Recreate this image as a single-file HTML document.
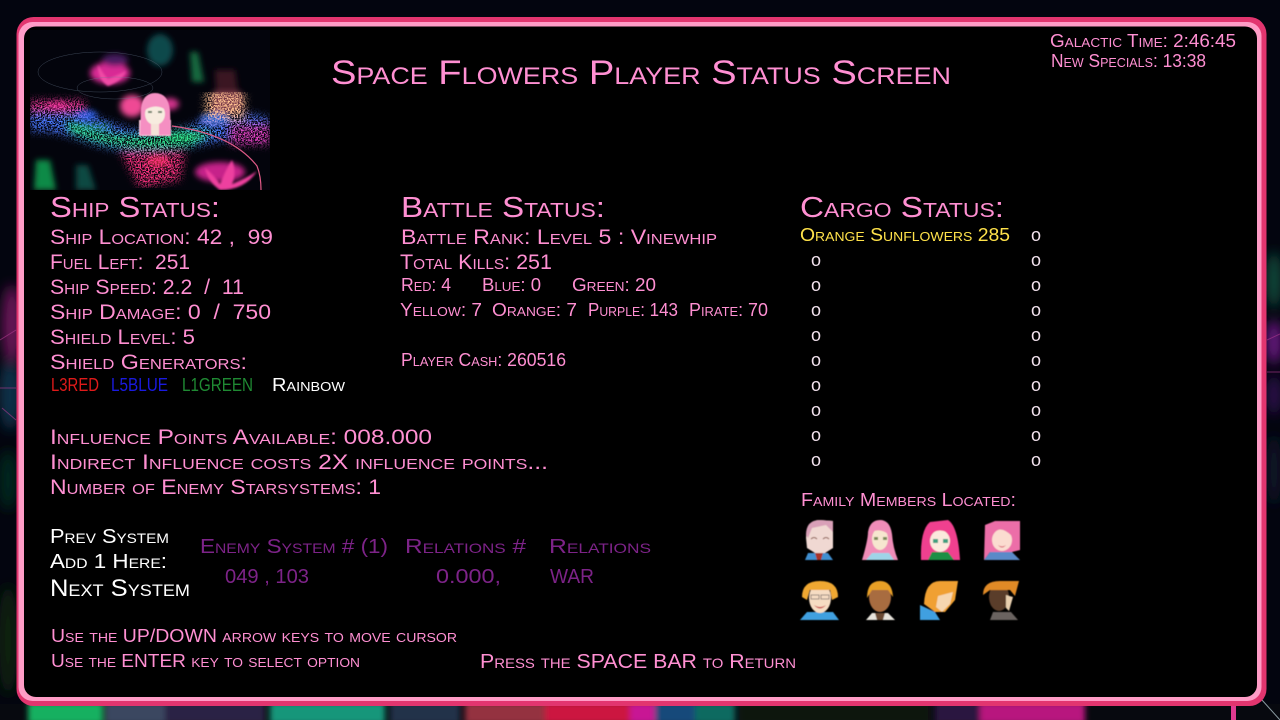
<!DOCTYPE html>
<html><head><meta charset="utf-8"><title>Space Flowers Player Status Screen</title>
<style>
html,body{margin:0;padding:0;background:#03050f;width:1280px;height:720px;overflow:hidden}
svg{display:block;position:absolute;left:0;top:0}
text{font-family:"Liberation Sans",sans-serif;font-variant:small-caps;fill:#ff8fd2;white-space:pre}
.s17{font-size:18px}.s19{font-size:20px}.s20{font-size:21px}.s28{font-size:29px}
.p{fill:#7d2388;font-size:20px}
.w{fill:#fff}
.o{font-size:18px;font-variant:normal;fill:#f3e3ee;text-anchor:middle}
</style></head><body>
<svg width="1280" height="720" viewBox="0 0 1280 720" xmlns="http://www.w3.org/2000/svg">
<defs>
<filter id="b3" x="-50%" y="-50%" width="200%" height="200%"><feGaussianBlur stdDeviation="3"/></filter>
<filter id="b6" x="-50%" y="-50%" width="200%" height="200%"><feGaussianBlur stdDeviation="6"/></filter>
<filter id="b1"><feGaussianBlur stdDeviation="1"/></filter>
<filter id="soft"><feGaussianBlur stdDeviation=".45"/></filter>
<filter id="sp" x="0" y="0" width="100%" height="100%">
<feGaussianBlur in="SourceGraphic" stdDeviation="4" result="c"/>
<feTurbulence type="fractalNoise" baseFrequency="0.7" numOctaves="2" seed="4"/>
<feColorMatrix type="matrix" values="0 0 0 0 1 0 0 0 0 1 0 0 0 0 1 7 0 0 0 -3"/>
<feComposite in="c" operator="in"/>
</filter>
<clipPath id="im"><rect x="30" y="30" width="240" height="160"/></clipPath>
</defs>

<!-- background -->
<rect width="1280" height="720" fill="#03050f"/>
<g filter="url(#b6)">
<ellipse cx="12" cy="325" rx="10" ry="40" fill="#6a1258"/>
<ellipse cx="10" cy="395" rx="11" ry="35" fill="#0f3048"/>
<ellipse cx="8" cy="480" rx="10" ry="30" fill="#05251a"/>
<ellipse cx="8" cy="640" rx="10" ry="55" fill="#08220f"/>
<ellipse cx="1274" cy="280" rx="8" ry="28" fill="#0a4a3a"/>
<ellipse cx="1274" cy="342" rx="9" ry="22" fill="#64147a"/>
<ellipse cx="1274" cy="395" rx="8" ry="20" fill="#2a1048"/>
<ellipse cx="1274" cy="470" rx="8" ry="35" fill="#0a1428"/>
</g>
<path d="M0 388H16M0 340L16 330M2 408L16 420M1267 340L1280 334M1267 372H1280" stroke="#b03a90" stroke-width="1" opacity=".6"/>
<rect x="0" y="704" width="1280" height="16" fill="#07090f"/>
<g filter="url(#b3)">
<rect x="28" y="702" width="75" height="22" fill="#18b060"/>
<rect x="105" y="702" width="60" height="22" fill="#3a4660"/>
<rect x="165" y="702" width="100" height="22" fill="#2a2045"/>
<rect x="270" y="702" width="115" height="22" fill="#12967a"/>
<rect x="390" y="702" width="70" height="22" fill="#223048"/>
<rect x="465" y="702" width="80" height="22" fill="#94303f"/>
<rect x="545" y="702" width="85" height="22" fill="#cc1440"/>
<rect x="630" y="702" width="25" height="22" fill="#c81894"/>
<rect x="655" y="702" width="40" height="22" fill="#124a7a"/>
<rect x="695" y="702" width="40" height="22" fill="#0f6a60"/>
<rect x="740" y="702" width="190" height="22" fill="#081410"/>
<rect x="935" y="702" width="45" height="22" fill="#2a1440"/>
<rect x="980" y="702" width="105" height="22" fill="#b8127e"/>
</g>
<rect x="1231" y="706" width="5" height="14" fill="#e03a90"/>
<path d="M1262 700L1280 720" stroke="#8a9aa0" stroke-width="1" fill="none"/>

<!-- frame -->
<rect x="16.5" y="17" width="1250" height="689" rx="17" fill="#e2356f"/>
<rect x="18.5" y="22" width="1243" height="679" rx="14" fill="#ff9cc6"/>
<rect x="24" y="26.500" width="1233" height="670.500" rx="12" fill="#000"/>

<!-- picture -->
<g clip-path="url(#im)">
<rect x="30" y="30" width="240" height="160" fill="#03040c"/>
<g filter="url(#b3)">
<ellipse cx="160" cy="50" rx="13" ry="16" fill="#0d4a4c"/>
<path d="M190 52l8 0 6 30-12 0z" fill="#126a40"/>
<path d="M212 92l30 0 0 18-30 6z" fill="#7a3a48"/>
<path d="M215 70l20 0 3 22-22 0z" fill="#3a1422"/>
<ellipse cx="110" cy="73" rx="20" ry="11" fill="#d92a95"/>
<ellipse cx="115" cy="60" rx="13" ry="6" fill="#4a1a60"/>
<ellipse cx="132" cy="106" rx="12" ry="11" fill="#ef4a94"/>
<ellipse cx="170" cy="104" rx="9" ry="6" fill="#d0328a"/>
<ellipse cx="86" cy="115" rx="11" ry="5" fill="#2050c8"/>
<ellipse cx="58" cy="106" rx="11" ry="3.500" fill="#b81a72"/>
<ellipse cx="215" cy="119" rx="15" ry="6" fill="#2060d0"/>
<ellipse cx="90" cy="127" rx="22" ry="4" fill="#0c7040"/>
<ellipse cx="185" cy="137" rx="20" ry="4" fill="#0c6a44"/>
<path d="M36 160l14 0 6 30-22 0z" fill="#0f8a46"/>
<path d="M76 165l12 0 8 25-20 0z" fill="#0b4a42"/>
<ellipse cx="158" cy="161" rx="11" ry="6" fill="#b5283c"/>
<ellipse cx="220" cy="172" rx="25" ry="10" fill="#c6208a"/>
</g>
<path d="M205 168q10 8 15 16 5-13 12-24 5 13 0 24 15-6 25-13-12 19-37 19-12-8-15-22z" fill="#ee3f9f" filter="url(#b1)"/>
<path d="M98 65q6 10 10 14 5-2 18-8-4 10-18 15-10-6-10-21z" fill="#f04ca6" filter="url(#b1)"/>
<g filter="url(#sp)">
<path d="M30 100Q60 100 100 118 150 140 190 125 230 105 270 118V135Q220 140 190 148 130 160 80 140 50 130 30 132z" fill="#4a78ff"/>
<path d="M30 100H85V112H30z" fill="#ff3aa0"/>
<path d="M65 120Q120 145 180 130L215 132 190 146Q120 155 70 132z" fill="#30e888"/>
<path d="M230 125H270V145H230z" fill="#e040c0"/>
<path d="M120 152H185L180 180 140 188z" fill="#ff3080"/>
<path d="M205 92H245V120H205z" fill="#ffc090"/>
</g>
<g fill="none" stroke="#6a7a90" stroke-width=".5" opacity=".55">
<ellipse cx="115" cy="88" rx="38" ry="11"/><ellipse cx="100" cy="72" rx="62" ry="20"/>
</g>
<path d="M172 126q60 8 85 40 4 10 4 24" fill="none" stroke="#e05a88" stroke-width="1.2"/>
<!-- portrait -->
<g filter="url(#soft)">
<rect x="139" y="120" width="32" height="16" fill="#f7c9dc"/>
<path d="M140 135L141 108Q143 93 155 93 168 93 170 110L171 135z" fill="#f58fc2"/>
<ellipse cx="155" cy="114" rx="10" ry="11" fill="#f7ecdf"/>
<path d="M145 110q3-12 10-12 9 0 11 12-10-7-21 0z" fill="#f58fc2"/>
<rect x="151" y="124" width="8" height="11" fill="#f6e2d8"/>
<rect x="148" y="111" width="4" height="2" fill="#70806a"/><rect x="158" y="111" width="4" height="2" fill="#70806a"/>
</g>
</g>

<!-- title -->
<text x="331" y="84" style="font-size:34px" textLength="620" lengthAdjust="spacingAndGlyphs">Space Flowers Player Status Screen</text>
<text x="1050" y="47" class="s17" textLength="186" lengthAdjust="spacingAndGlyphs">Galactic Time: 2:46:45</text>
<text x="1051" y="67" class="s17" textLength="155" lengthAdjust="spacingAndGlyphs">New Specials: 13:38</text>

<!-- ship -->
<text x="50" y="217" class="s28" textLength="170" lengthAdjust="spacingAndGlyphs">Ship Status:</text>
<text x="50" y="244" class="s20" textLength="223" lengthAdjust="spacingAndGlyphs">Ship Location: 42 ,  99</text>
<text x="50" y="269" class="s20" textLength="140" lengthAdjust="spacingAndGlyphs">Fuel Left:  251</text>
<text x="50" y="294" class="s20" textLength="194" lengthAdjust="spacingAndGlyphs">Ship Speed: 2.2  /  11</text>
<text x="50" y="319" class="s20" textLength="221" lengthAdjust="spacingAndGlyphs">Ship Damage: 0  /  750</text>
<text x="50" y="344" class="s20" textLength="145" lengthAdjust="spacingAndGlyphs">Shield Level: 5</text>
<text x="50" y="369" class="s20" textLength="197" lengthAdjust="spacingAndGlyphs">Shield Generators:</text>
<text x="51" y="391" class="s17" style="fill:#e01a1a" textLength="48" lengthAdjust="spacingAndGlyphs">L3RED</text>
<text x="111" y="391" class="s17" style="fill:#1a1ae0" textLength="57" lengthAdjust="spacingAndGlyphs">L5BLUE</text>
<text x="182" y="391" class="s17" style="fill:#1f8a33" textLength="71" lengthAdjust="spacingAndGlyphs">L1GREEN</text>
<text x="272" y="391" class="s17 w" textLength="73" lengthAdjust="spacingAndGlyphs">Rainbow</text>
<text x="50" y="444" class="s20" textLength="382" lengthAdjust="spacingAndGlyphs">Influence Points Available: 008.000</text>
<text x="50" y="469" class="s20" textLength="498" lengthAdjust="spacingAndGlyphs">Indirect Influence costs 2X influence points...</text>
<text x="50" y="494" class="s20" textLength="331" lengthAdjust="spacingAndGlyphs">Number of Enemy Starsystems: 1</text>

<!-- battle -->
<text x="401" y="217" class="s28" textLength="204" lengthAdjust="spacingAndGlyphs">Battle Status:</text>
<text x="401" y="244" class="s20" textLength="316" lengthAdjust="spacingAndGlyphs">Battle Rank: Level 5 : Vinewhip</text>
<text x="400" y="269" class="s20" textLength="152" lengthAdjust="spacingAndGlyphs">Total Kills: 251</text>
<text x="401" y="291" class="s17" textLength="50" lengthAdjust="spacingAndGlyphs">Red: 4</text>
<text x="482" y="291" class="s17" textLength="59" lengthAdjust="spacingAndGlyphs">Blue: 0</text>
<text x="572" y="291" class="s17" textLength="84" lengthAdjust="spacingAndGlyphs">Green: 20</text>
<text x="400" y="316" class="s17" textLength="82" lengthAdjust="spacingAndGlyphs">Yellow: 7</text>
<text x="492" y="316" class="s17" textLength="85" lengthAdjust="spacingAndGlyphs">Orange: 7</text>
<text x="588" y="316" class="s17" textLength="90" lengthAdjust="spacingAndGlyphs">Purple: 143</text>
<text x="689" y="316" class="s17" textLength="79" lengthAdjust="spacingAndGlyphs">Pirate: 70</text>
<text x="401" y="366" class="s17" textLength="165" lengthAdjust="spacingAndGlyphs">Player Cash: 260516</text>

<!-- cargo -->
<text x="800" y="217" class="s28" textLength="204" lengthAdjust="spacingAndGlyphs">Cargo Status:</text>
<text x="800" y="241" class="s17" style="fill:#ffe24a" textLength="210" lengthAdjust="spacingAndGlyphs">Orange Sunflowers 285</text>
<g class="cargo">
<text class="o" x="1036" y="241">o</text>
<text class="o" x="816" y="266">o</text><text class="o" x="1036" y="266">o</text>
<text class="o" x="816" y="291">o</text><text class="o" x="1036" y="291">o</text>
<text class="o" x="816" y="316">o</text><text class="o" x="1036" y="316">o</text>
<text class="o" x="816" y="341">o</text><text class="o" x="1036" y="341">o</text>
<text class="o" x="816" y="366">o</text><text class="o" x="1036" y="366">o</text>
<text class="o" x="816" y="391">o</text><text class="o" x="1036" y="391">o</text>
<text class="o" x="816" y="416">o</text><text class="o" x="1036" y="416">o</text>
<text class="o" x="816" y="441">o</text><text class="o" x="1036" y="441">o</text>
<text class="o" x="816" y="466">o</text><text class="o" x="1036" y="466">o</text>
</g>
<text x="801" y="506" class="s17" textLength="215" lengthAdjust="spacingAndGlyphs">Family Members Located:</text>

<!-- family portraits -->
<g filter="url(#soft)">
<g>
<path d="M805 560l3-7 20 0 5 7z" fill="#3f8fd0"/><path d="M815 553h8l-2 7h-4z" fill="#a83028"/>
<path d="M806 538Q806 520 820 520L833 521 833 548 825 553 815 553 807 548z" fill="#f0d8d2"/>
<path d="M806 535Q806 520 820 520L833 521 833 532 826 525 812 528 808 538z" fill="#d9a0b8"/>
<path d="M811 539q3-3 6 0M823 539q3-3 6 0" stroke="#8a5a50" fill="none"/>
</g>
<g>
<path d="M862 560Q868 540 868 532 870 520 880 520 890 520 892 534 893 548 898 560z" fill="#f08db8"/>
<ellipse cx="880" cy="539" rx="8" ry="11" fill="#f6e6cf"/>
<path d="M872 553l-6 7 28 0-5-7z" fill="#9fd4e8"/>
<path d="M872 532Q880 522 888 534 880 528 872 532z" fill="#f08db8"/>
<rect x="874" y="537" width="4" height="3" fill="#7a8a5a"/><rect x="883" y="537" width="4" height="3" fill="#7a8a5a"/>
</g>
<g>
<path d="M921 560Q920 530 930 522L948 520Q958 526 960 560z" fill="#f0408f"/>
<ellipse cx="940" cy="541" rx="10" ry="11" fill="#fbe9dc"/>
<path d="M930 536Q936 526 952 534L948 526 932 526z" fill="#f0408f"/>
<rect x="933" y="539" width="5" height="4" fill="#3fa080"/><rect x="943" y="539" width="5" height="4" fill="#3fa080"/>
<path d="M928 560l4-8 16 0 6 8z" fill="#1f8f45"/>
</g>
<g>
<path d="M984 560L985 525 995 521 1020 521 1020 550 1012 552 990 552z" fill="#ec6ea8"/>
<ellipse cx="1002" cy="540" rx="10" ry="11" fill="#fbdcd0"/>
<path d="M992 534Q1000 524 1012 536L1012 526 994 526z" fill="#ec6ea8"/>
<path d="M984 560l6-8 22 0 8 8z" fill="#5a8ac8"/>
<path d="M998 545q4 3 8 0-4 5-8 0z" fill="#d85a70"/>
</g>
<g>
<path d="M800 620l7-8 26 0 6 8z" fill="#3fa0e0"/>
<ellipse cx="820" cy="598" rx="11" ry="15" fill="#f6dcc2"/>
<path d="M802 597Q802 581 820 581 838 581 838 597L832 600 830 590 810 590 807 600z" fill="#f0a830"/>
<rect x="811" y="595" width="8" height="4" fill="none" stroke="#9a8a80"/><rect x="821" y="595" width="8" height="4" fill="none" stroke="#9a8a80"/>
<path d="M814 605q6 4 12 0-6 7-12 0z" fill="#c84a4a"/>
</g>
<g>
<path d="M866 620l6-7 16 0 7 7z" fill="#e8e4dc"/><path d="M875 613h10l-2 7h-6z" fill="#6a4a30"/>
<ellipse cx="880" cy="597" rx="11" ry="15" fill="#a86c40"/>
<path d="M867 598Q867 581 880 581 892 581 893 597L888 590 872 590z" fill="#e8a028"/>
</g>
<g>
<path d="M920 620L920 605 935 612 940 620z" fill="#3fa0e0"/>
<path d="M924 604Q925 581 940 581L958 581 955 600 945 612 935 612z" fill="#f0a030"/>
<path d="M938 596l15-4-3 12-8 8-6-5z" fill="#f6d6b0"/>
</g>
<g>
<path d="M990 620l3-8 18 0 7 8z" fill="#6a6460"/>
<ellipse cx="999" cy="597" rx="10" ry="14" fill="#5a3d2a"/>
<path d="M983 595Q983 581 1000 581L1019 581 1015 596 1010 590 990 590z" fill="#e08a28"/>
<path d="M1006 595l7 2-4 14-3-3z" fill="#e8cfae"/>
</g>
</g>

<!-- selection -->
<text x="50" y="543" class="s19 w" textLength="119" lengthAdjust="spacingAndGlyphs">Prev System</text>
<text x="50" y="568" class="s19 w" textLength="117" lengthAdjust="spacingAndGlyphs">Add 1 Here:</text>
<text x="50" y="596" class="w" style="font-size:24px" textLength="140" lengthAdjust="spacingAndGlyphs">Next System</text>
<text x="200" y="553" class="p" textLength="188" lengthAdjust="spacingAndGlyphs">Enemy System # (1)</text>
<text x="405" y="553" class="p" textLength="121" lengthAdjust="spacingAndGlyphs">Relations #</text>
<text x="549" y="553" class="p" textLength="102" lengthAdjust="spacingAndGlyphs">Relations</text>
<text x="225" y="583" class="p" textLength="84" lengthAdjust="spacingAndGlyphs">049 , 103</text>
<text x="436" y="583" class="p" textLength="65" lengthAdjust="spacingAndGlyphs">0.000,</text>
<text x="550" y="583" class="p" textLength="44" lengthAdjust="spacingAndGlyphs">WAR</text>

<!-- help -->
<text x="51" y="642" class="s17" textLength="406" lengthAdjust="spacingAndGlyphs">Use the UP/DOWN arrow keys to move cursor</text>
<text x="51" y="667" class="s17" textLength="309" lengthAdjust="spacingAndGlyphs">Use the ENTER key to select option</text>
<text x="480" y="668" class="s19" textLength="316" lengthAdjust="spacingAndGlyphs">Press the SPACE BAR to Return</text>
</svg>
</body></html>
